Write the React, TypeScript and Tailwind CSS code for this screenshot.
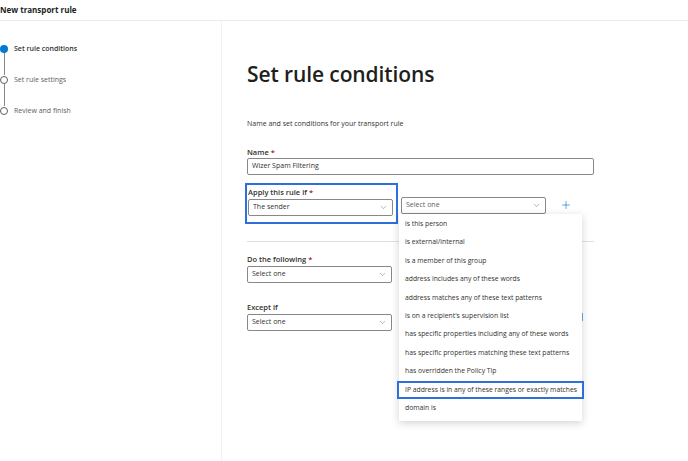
import { ChevronDown, Plus } from "lucide-react";

const options = [
  "is this person",
  "is external/internal",
  "is a member of this group",
  "address includes any of these words",
  "address matches any of these text patterns",
  "is on a recipient's supervision list",
  "has specific properties including any of these words",
  "has specific properties matching these text patterns",
  "has overridden the Policy Tip",
  "IP address is in any of these ranges or exactly matches",
  "domain is",
];

const steps = [
  { label: "Set rule conditions", active: true },
  { label: "Set rule settings", active: false },
  { label: "Review and finish", active: false },
];

function Select({ value, placeholder }: { value?: string; placeholder?: boolean }) {
  return (
    <div className="flex h-[17px] w-[145px] items-center justify-between rounded-[2px] border border-[#8a8886] bg-white pl-[4px] pr-[4px]">
      <span className={`text-[7px] ${placeholder ? "text-[#605e5c]" : "text-[#323130]"}`}>{value}</span>
      <ChevronDown size={9} strokeWidth={1.2} className="text-[#605e5c]" />
    </div>
  );
}

function Label({ text, required }: { text: string; required?: boolean }) {
  return (
    <div className="text-[7.5px] font-semibold leading-[10px] text-[#323130]">
      {text}
      {required && <span className="text-[#a4262c]"> *</span>}
    </div>
  );
}

export default function App() {
  return (
    <div
      className="h-[461px] w-[688px] overflow-hidden bg-white text-[#323130]"
      style={{ fontFamily: '"Open Sans", "Noto Sans", sans-serif' }}
    >
      {/* Header */}
      <div className="flex h-[21px] items-center border-b border-[#edebe9] pb-[1px]">
        <span className="text-[8px] font-bold leading-none text-[#201f1e]">New transport rule</span>
      </div>

      <div className="flex h-[440px]">
        {/* Left steps */}
        <div className="w-[222px] shrink-0 border-r border-[#f3f2f1] pt-[23px]">
          {steps.map((s, i) => (
            <div key={s.label} className="flex flex-col">
              <div className="flex h-[9px] items-center gap-[6px]">
                <div
                  className={`h-[8px] w-[8px] rounded-full ${
                    s.active ? "bg-[#0078d4]" : "border border-[#605e5c] bg-white"
                  }`}
                />
                <span
                  className={`text-[7px] leading-none ${
                    s.active ? "font-semibold text-[#323130]" : "text-[#605e5c]"
                  }`}
                >
                  {s.label}
                </span>
              </div>
              {i < steps.length - 1 && <div className="ml-[3.5px] h-[22px] w-px bg-[#8a8886]" />}
            </div>
          ))}
        </div>

        {/* Main */}
        <div className="flex-1 pl-[25px] pt-[39px]">
          <h1 className="text-[21px] font-semibold leading-[28px] tracking-[-0.1px] text-[#201f1e]">
            Set rule conditions
          </h1>
          <p className="mt-[31px] text-[7px] leading-[10px] text-[#323130]">
            Name and set conditions for your transport rule
          </p>

          <div className="mt-[18px] w-[347px]">
            <Label text="Name" required />
            <div className="mt-[1px] flex h-[17px] items-center rounded-[2px] border border-[#8a8886] px-[4px]">
              <span className="text-[7px] text-[#323130]">Wizer Spam Filtering</span>
            </div>

            <div className="relative mt-[8px] flex items-start gap-[3px]">
              <div className="-ml-[2px] h-[41px] w-[153px] border-2 border-[#2f6fdc] pl-[1px] pt-[2px]">
                <Label text="Apply this rule if" required />
                <div className="mt-[2px]">
                  <Select value="The sender" />
                </div>
              </div>
              <div className="relative mt-[14px]">
                <Select value="Select one" placeholder />
                {/* Dropdown */}
                <div className="absolute left-[-2px] top-[17px] z-10 w-[183px] bg-white pb-[4px] pt-[1px] shadow-[0_2px_8px_rgba(0,0,0,0.18)]">
                  {options.map((o, i) => (
                    <div
                      key={o}
                      className={`flex h-[18.4px] items-center whitespace-nowrap text-[6.8px] text-[#323130] ${
                        i === 9 ? "-mx-[2px] border-2 border-[#2f6fdc] pl-[6px]" : "pl-[6px]"
                      }`}
                    >
                      {o}
                    </div>
                  ))}
                </div>
              </div>
              <div className="mt-[16px] ml-[11px] text-[#0078d4]">
                <Plus size={12} strokeWidth={1.3} />
              </div>
            </div>

            <div className="mt-[17px] h-px w-full bg-[#e1dfdd]" />

            <div className="mt-[12px]">
              <Label text="Do the following" required />
              <div className="mt-[2px]">
                <Select value="Select one" />
              </div>
            </div>

            <div className="relative mt-[19px]">
              <Label text="Except if" />
              <div className="mt-[2px]">
                <Select value="Select one" />
              </div>
              <div className="absolute left-[334px] top-[11px] h-[8px] w-[2px] bg-[#6ea8e8]" />
            </div>
          </div>
        </div>
      </div>
    </div>
  );
}
